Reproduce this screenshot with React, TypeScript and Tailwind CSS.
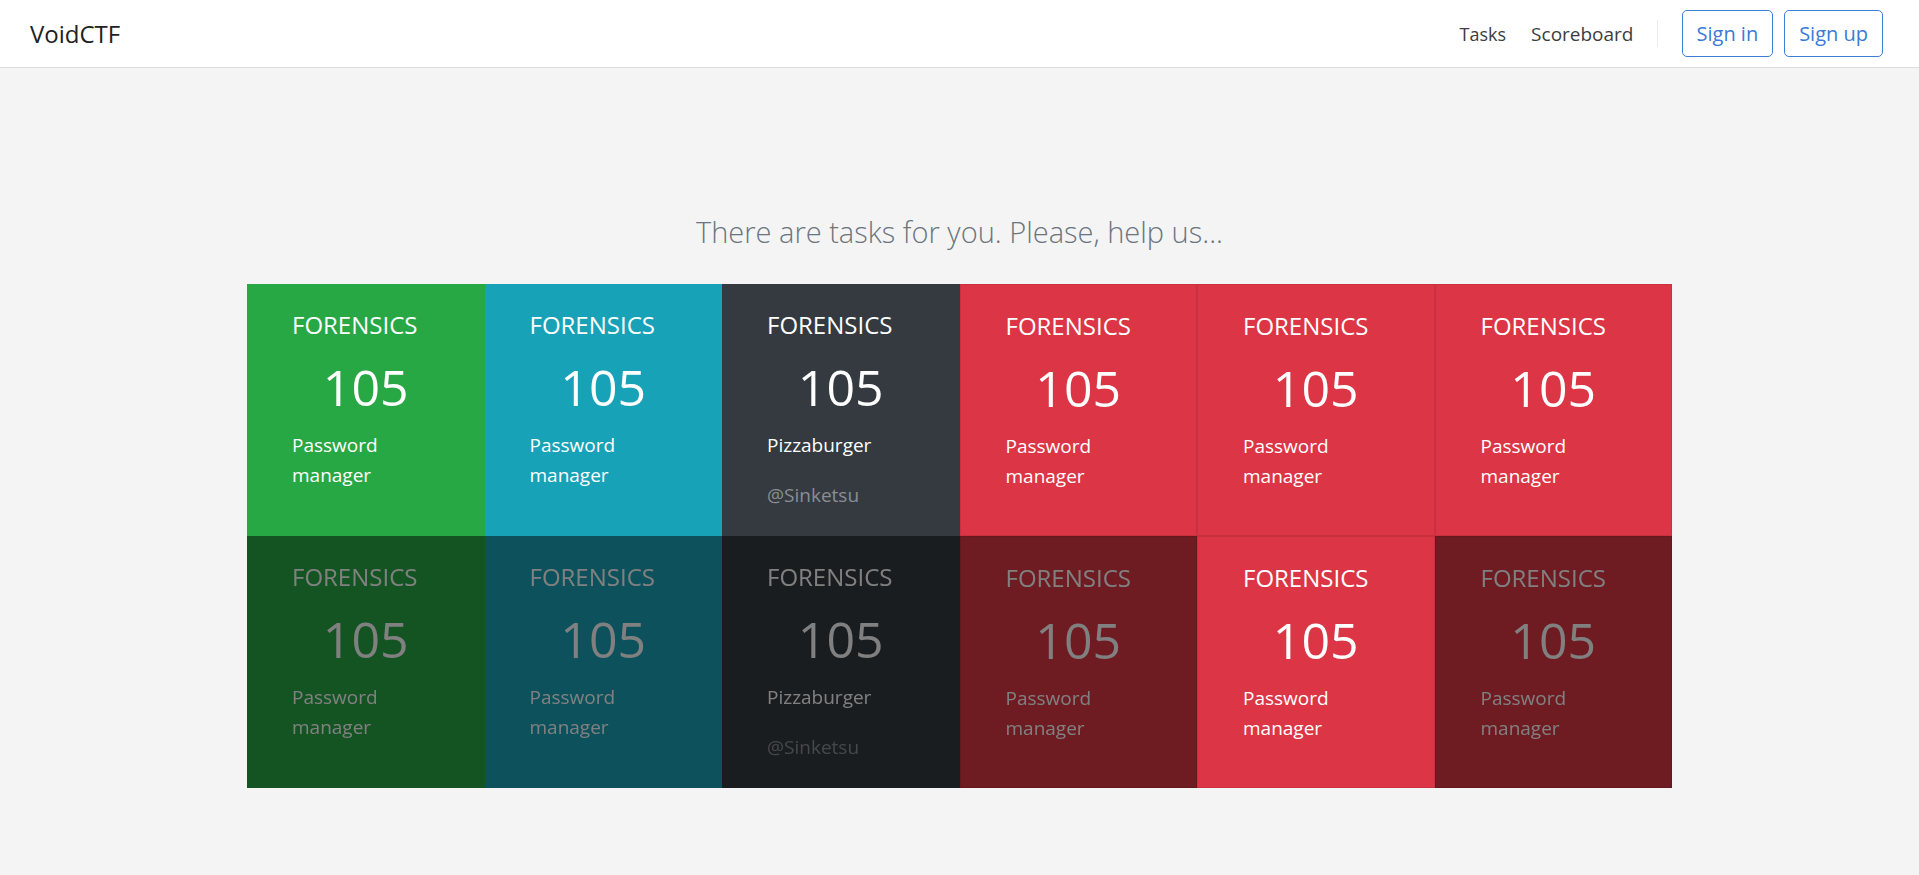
import React from "react";

type Cell = {
  bg: string;
  title: string;
  name: string;
  author?: string;
  dim?: boolean;
  red?: boolean;
};

const rowTop: Cell[] = [
  { bg: "bg-[#28a745]", title: "FORENSICS", name: "Password manager" },
  { bg: "bg-[#17a2b8]", title: "FORENSICS", name: "Password manager" },
  { bg: "bg-[#343a40]", title: "FORENSICS", name: "Pizzaburger", author: "@Sinketsu" },
  { bg: "bg-[#dc3545]", title: "FORENSICS", name: "Password manager", red: true },
  { bg: "bg-[#dc3545]", title: "FORENSICS", name: "Password manager", red: true },
  { bg: "bg-[#dc3545]", title: "FORENSICS", name: "Password manager", red: true },
];

const rowBottom: Cell[] = [
  { bg: "bg-[#28a745]", title: "FORENSICS", name: "Password manager", dim: true },
  { bg: "bg-[#17a2b8]", title: "FORENSICS", name: "Password manager", dim: true },
  { bg: "bg-[#343a40]", title: "FORENSICS", name: "Pizzaburger", author: "@Sinketsu", dim: true },
  { bg: "bg-[#dc3545]", title: "FORENSICS", name: "Password manager", red: true, dim: true },
  { bg: "bg-[#dc3545]", title: "FORENSICS", name: "Password manager", red: true },
  { bg: "bg-[#dc3545]", title: "FORENSICS", name: "Password manager", red: true, dim: true },
];

function TaskCell({ c }: { c: Cell }) {
  return (
    <div
      className={`${c.bg} ${c.red ? "border border-[#c93040]" : ""} ${
        c.dim ? "brightness-50" : ""
      } flex flex-col pt-[26px] pb-[26px] px-[45px] text-white cursor-pointer`}
    >
      <div className="text-[24px] leading-[30px]">{c.title}</div>
      <div className="text-[50px] leading-[64px] text-center mt-[15px]">105</div>
      <div className="text-[19px] leading-[30px] mt-[11px]">{c.name}</div>
      {c.author && (
        <div className="text-[19px] leading-[30px] mt-[20px] text-[#8a8e93]">{c.author}</div>
      )}
    </div>
  );
}

export default function App() {
  return (
    <div
      className="min-h-[875px] bg-[#f4f4f4]"
      style={{ fontFamily: '"Open Sans", "Noto Sans", sans-serif' }}
    >
      <nav className="h-[68px] bg-white border-b border-[#dedede] flex items-center justify-between pl-[30px] pr-[36px]">
        <div className="text-[24px] leading-[30px] text-[#212121]">VoidCTF</div>
        <div className="flex items-center">
          <a className="text-[18px] leading-[28px] text-[#3d3d3d]">Tasks</a>
          <a className="text-[19px] leading-[28px] text-[#3d3d3d] ml-[25px]">Scoreboard</a>
          <div className="w-px h-[27px] bg-[#ececec] ml-[23px] mr-[24px]" />
          <button className="h-[47px] px-[14px] border border-[#3b80d8] rounded-[5px] text-[20px] text-[#3a7bd5] bg-white">
            Sign in
          </button>
          <button className="h-[47px] px-[14px] ml-[11px] border border-[#3b80d8] rounded-[5px] text-[20px] text-[#3a7bd5] bg-white">
            Sign up
          </button>
        </div>
      </nav>

      <main className="w-[1425px] mx-auto">
        <h4 className="text-[29px] leading-[36px] font-light text-center text-[#6c757d] mt-[146px] mb-[34px]">
          There are tasks for you. Please, help us...
        </h4>
        <div className="grid grid-cols-6">
          {rowTop.map((c, i) => (
            <TaskCell key={`t${i}`} c={c} />
          ))}
          {rowBottom.map((c, i) => (
            <TaskCell key={`b${i}`} c={c} />
          ))}
        </div>
      </main>
    </div>
  );
}
